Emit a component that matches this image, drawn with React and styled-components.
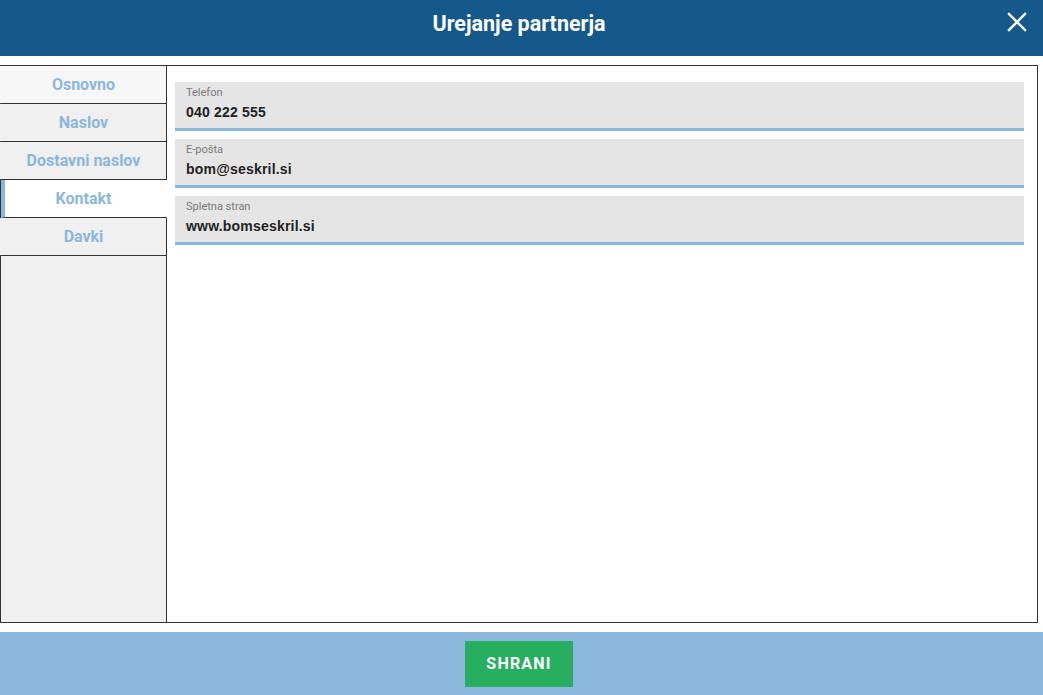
import React, { useState } from 'react';
import styled, { createGlobalStyle } from 'styled-components';

const GlobalStyle = createGlobalStyle`
    html, body {
        margin: 0;
        padding: 0;
        background: #ffffff;
        font-family: Roboto, "Liberation Sans", Arial, sans-serif;
    }
`;

const Page = styled.div`
    display: flex;
    flex-direction: column;
    width: 1043px;
    height: 695px;
`;

const Header = styled.div`
    position: relative;
    display: flex;
    align-items: center;
    justify-content: center;
    height: 56px;
    flex-shrink: 0;
    padding-right: 5px;
    background-color: #15588a;
    h2 {
        margin: 0;
        color: #ffffff;
        font-size: 21.5px;
        font-weight: 700;
        padding-bottom: 10px;
    }
`;

const CloseButton = styled.button`
    position: absolute;
    right: 14px;
    top: 10px;
    width: 24px;
    height: 24px;
    padding: 0;
    border: none;
    background: none;
    cursor: pointer;
`;

const Body = styled.div`
    display: flex;
    margin: 9px 5px 9px 0;
    height: 558px;
    border: 1px solid #333333;
    box-sizing: border-box;
`;

const Sidebar = styled.div`
    display: flex;
    flex-direction: column;
    width: 166px;
    flex-shrink: 0;
    background-color: #f0f0f0;
`;

const Tab = styled.div`
    height: 37px;
    flex-shrink: 0;
    display: flex;
    align-items: center;
    justify-content: center;
    font-size: 16px;
    font-weight: 700;
    color: #8cb7dc;
    border-bottom: 1px solid #333333;
    border-right: 1px solid ${(p) => (p.$active ? 'transparent' : '#333333')};
    border-left: 4px solid ${(p) => (p.$active ? '#8cb7dc' : 'transparent')};
    background-color: ${(p) => (p.$active ? '#ffffff' : p.$light ? '#f7f7f7' : '#f0f0f0')};
    margin-left: ${(p) => (p.$active ? '0' : '-4px')};
    padding: 0 4px 0 ${(p) => (p.$active ? '0' : '4px')};
    cursor: pointer;
    line-height: 1;
`;

const Filler = styled.div`
    flex: 1;
    border-right: 1px solid #333333;
`;

const Content = styled.div`
    flex: 1;
    display: flex;
    flex-direction: column;
    gap: 8px;
    padding: 16px 13px 0 8px;
`;

const Field = styled.div`
    display: flex;
    flex-direction: column;
    height: 49px;
    padding: 4px 11px 0;
    box-sizing: border-box;
    background-color: #e5e5e5;
    border-bottom: 3px solid #8cb7dc;
    label {
        font-size: 11px;
        color: #7a7a7a;
        line-height: 13px;
    }
    span {
        margin-top: 5px;
        font-family: "Liberation Sans", Arial, sans-serif;
        font-size: 14px;
        font-weight: 700;
        letter-spacing: 0.2px;
        color: #222222;
        line-height: 16px;
    }
`;

const Footer = styled.div`
    flex: 1;
    display: flex;
    align-items: center;
    justify-content: center;
    padding-right: 5px;
    background-color: #8cb7dc;
`;

const SaveButton = styled.button`
    width: 108px;
    height: 46px;
    border: none;
    background-color: #27ae60;
    color: #ffffff;
    font-family: Roboto, sans-serif;
    font-size: 16px;
    font-weight: 700;
    letter-spacing: 1.2px;
    cursor: pointer;
`;

const tabs = ['Osnovno', 'Naslov', 'Dostavni naslov', 'Kontakt', 'Davki'];

const fields = [
    { label: 'Telefon', value: '040 222 555' },
    { label: 'E-pošta', value: 'bom@seskril.si' },
    { label: 'Spletna stran', value: 'www.bomseskril.si' },
];

export default function App() {
    const [active, setActive] = useState('Kontakt');
    return (
        <Page>
            <GlobalStyle />
            <Header>
                <h2>Urejanje partnerja</h2>
                <CloseButton aria-label="Zapri">
                    <svg width="24" height="24" viewBox="0 0 24 24">
                        <path d="M4 4 L20 20 M20 4 L4 20" stroke="#ffffff" strokeWidth="2.4" strokeLinecap="square" />
                    </svg>
                </CloseButton>
            </Header>
            <Body>
                <Sidebar>
                    {tabs.map((t, i) => (
                        <Tab key={t} $active={t === active} $light={i === 0} onClick={() => setActive(t)}>
                            {t}
                        </Tab>
                    ))}
                    <Filler />
                </Sidebar>
                <Content>
                    {fields.map((f) => (
                        <Field key={f.label}>
                            <label>{f.label}</label>
                            <span>{f.value}</span>
                        </Field>
                    ))}
                </Content>
            </Body>
            <Footer>
                <SaveButton>SHRANI</SaveButton>
            </Footer>
        </Page>
    );
}
